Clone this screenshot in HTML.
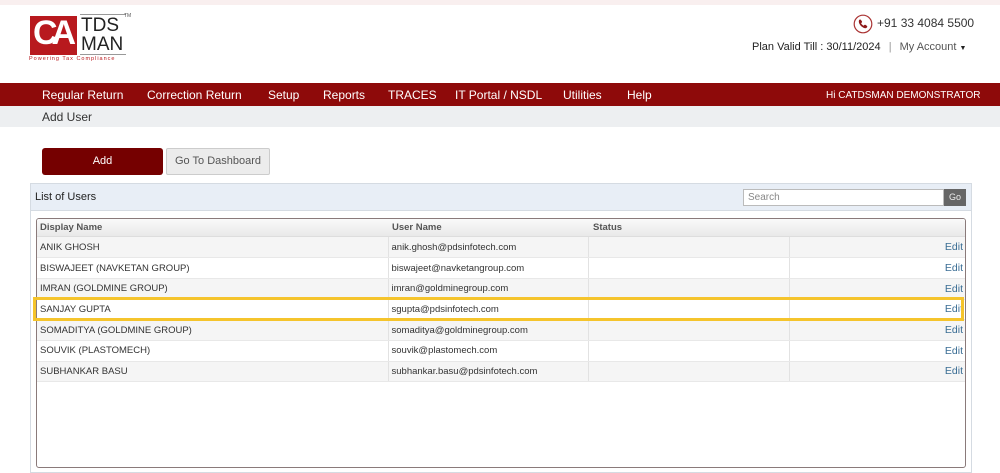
<!DOCTYPE html>
<html><head><meta charset="utf-8"><style>
*{margin:0;padding:0;box-sizing:border-box}
body{width:1000px;height:461px;overflow:hidden;background:#fff;font-family:"Liberation Sans",sans-serif;position:relative}
.abs{position:absolute}
.nav{top:83px;left:0;width:1000px;height:23px;background:#8e0a0a;color:#fff;font-size:12px}
.nav span{position:absolute;top:5px}
.crumb{top:106px;left:0;width:1000px;height:21px;background:#edeff1;font-size:12px;color:#333}
table{border-collapse:collapse;font-size:9.5px;color:#333}
td{height:20.7px;padding:0 3px;border-right:1px solid #e2e2e2;border-bottom:1px solid #e8e8e8}
tr.g td{background:#f5f5f5}
td.e{text-align:right;color:#3a6d94;font-size:10.5px;border-right:none}
</style></head><body>
<div class="abs" style="top:0;left:0;width:1000px;height:5px;background:#f9efef"></div>
<div class="abs" style="left:30px;top:16px;width:47px;height:39px;background:#b8191e"></div>
<div class="abs" style="left:33px;top:14px;font:bold 34px 'Liberation Sans',sans-serif;color:#fff;letter-spacing:-6px">CA</div>
<div class="abs" style="left:80px;top:14px;width:46px;height:1px;background:#999"></div>
<div class="abs" style="left:81px;top:16px;font:19px/19px 'Liberation Sans',sans-serif;color:#222">TDS<br>MAN</div>
<div class="abs" style="left:80px;top:54px;width:46px;height:1px;background:#999"></div>
<div class="abs" style="left:29px;top:56px;font-size:5.5px;color:#b8191e;letter-spacing:1px">Powering Tax Compliance</div>
<div class="abs" style="left:124px;top:13px;font-size:5px;color:#555">TM</div>
<svg class="abs" style="left:853px;top:14px" width="20" height="20" viewBox="0 0 20 20"><circle cx="10" cy="10" r="8.8" fill="none" stroke="#a33" stroke-width="1.2"/><path d="M6 6.2c.6-.8 1.4-.9 1.9-.3l1 1.4c.3.5.2 1-.3 1.4l-.5.4c.5 1.2 1.4 2.1 2.6 2.6l.4-.5c.4-.5.9-.6 1.4-.3l1.4 1c.6.5.5 1.3-.3 1.9-1 .8-2.6.6-4.4-.9C7 11.4 5.2 8.4 6 6.2z" fill="#8e1a1a"/></svg>
<div class="abs" style="left:877px;top:16px;font-size:12px;color:#333">+91 33 4084 5500</div>
<div class="abs" style="left:752px;top:41px;font-size:11px;color:#222;white-space:nowrap">Plan Valid Till : 30/11/2024 <span style="color:#999;margin:0 5px">|</span> <span style="color:#555">My Account</span> <span style="font-size:7px">&#9660;</span></div>
<div class="abs nav"><span style="left:42px">Regular Return</span><span style="left:147px">Correction Return</span><span style="left:268px">Setup</span><span style="left:323px">Reports</span><span style="left:388px">TRACES</span><span style="left:455px">IT Portal / NSDL</span><span style="left:563px">Utilities</span><span style="left:627px">Help</span><span style="left:826px;font-size:10px;top:7px">Hi CATDSMAN DEMONSTRATOR</span></div>
<div class="abs crumb"><span style="position:absolute;left:42px;top:4px">Add User</span></div>
<div class="abs" style="left:42px;top:148px;width:121px;height:27px;background:#750000;border-radius:3px;color:#fff;font-size:11px;text-align:center;line-height:27px">Add</div>
<div class="abs" style="left:166px;top:148px;width:104px;height:27px;background:#ececec;border:1px solid #ccc;border-radius:2px;color:#555;font-size:11px;text-align:center;line-height:25px">Go To Dashboard</div>
<div class="abs" style="left:30px;top:183px;width:942px;height:290px;border:1px solid #d5dbe2"></div>
<div class="abs" style="left:31px;top:184px;width:940px;height:27px;background:#e8eef6;border-bottom:1px solid #d5dbe2"></div>
<div class="abs" style="left:35px;top:191px;font-size:11px;color:#222">List of Users</div>
<div class="abs" style="left:743px;top:189px;width:201px;height:17px;border:1px solid #bbb;background:#fff;font-size:10px;color:#888;padding:2px 4px">Search</div>
<div class="abs" style="left:944px;top:189px;width:22px;height:17px;background:#666;color:#eee;font-size:9px;text-align:center;line-height:17px">Go</div>
<div class="abs" style="left:36px;top:218px;width:930px;height:250px;border:1px solid #8a7a7a;border-radius:3px;overflow:hidden">
<div style="height:18px;background:linear-gradient(#fafafa,#e9e9e9);border-bottom:1px solid #ddd;font-size:9.5px;font-weight:bold;color:#555;position:relative">
<span style="position:absolute;left:3px;top:3px">Display Name</span><span style="position:absolute;left:355px;top:3px">User Name</span><span style="position:absolute;left:556px;top:3px">Status</span></div>
<table style="width:929px">
<colgroup><col style="width:351px"><col style="width:200px"><col style="width:201px"><col></colgroup>
<tr class="g"><td>ANIK GHOSH</td><td>anik.ghosh@pdsinfotech.com</td><td></td><td class="e">Edit</td></tr>
<tr><td>BISWAJEET (NAVKETAN GROUP)</td><td>biswajeet@navketangroup.com</td><td></td><td class="e">Edit</td></tr>
<tr class="g"><td>IMRAN (GOLDMINE GROUP)</td><td>imran@goldminegroup.com</td><td></td><td class="e">Edit</td></tr>
<tr><td>SANJAY GUPTA</td><td>sgupta@pdsinfotech.com</td><td></td><td class="e">Edit</td></tr>
<tr class="g"><td>SOMADITYA (GOLDMINE GROUP)</td><td>somaditya@goldminegroup.com</td><td></td><td class="e">Edit</td></tr>
<tr><td>SOUVIK (PLASTOMECH)</td><td>souvik@plastomech.com</td><td></td><td class="e">Edit</td></tr>
<tr class="g"><td>SUBHANKAR BASU</td><td>subhankar.basu@pdsinfotech.com</td><td></td><td class="e">Edit</td></tr>
</table></div>
<div class="abs" style="left:33px;top:297px;width:931px;height:24px;border:3px solid #f5c42c"></div>
</body></html>
